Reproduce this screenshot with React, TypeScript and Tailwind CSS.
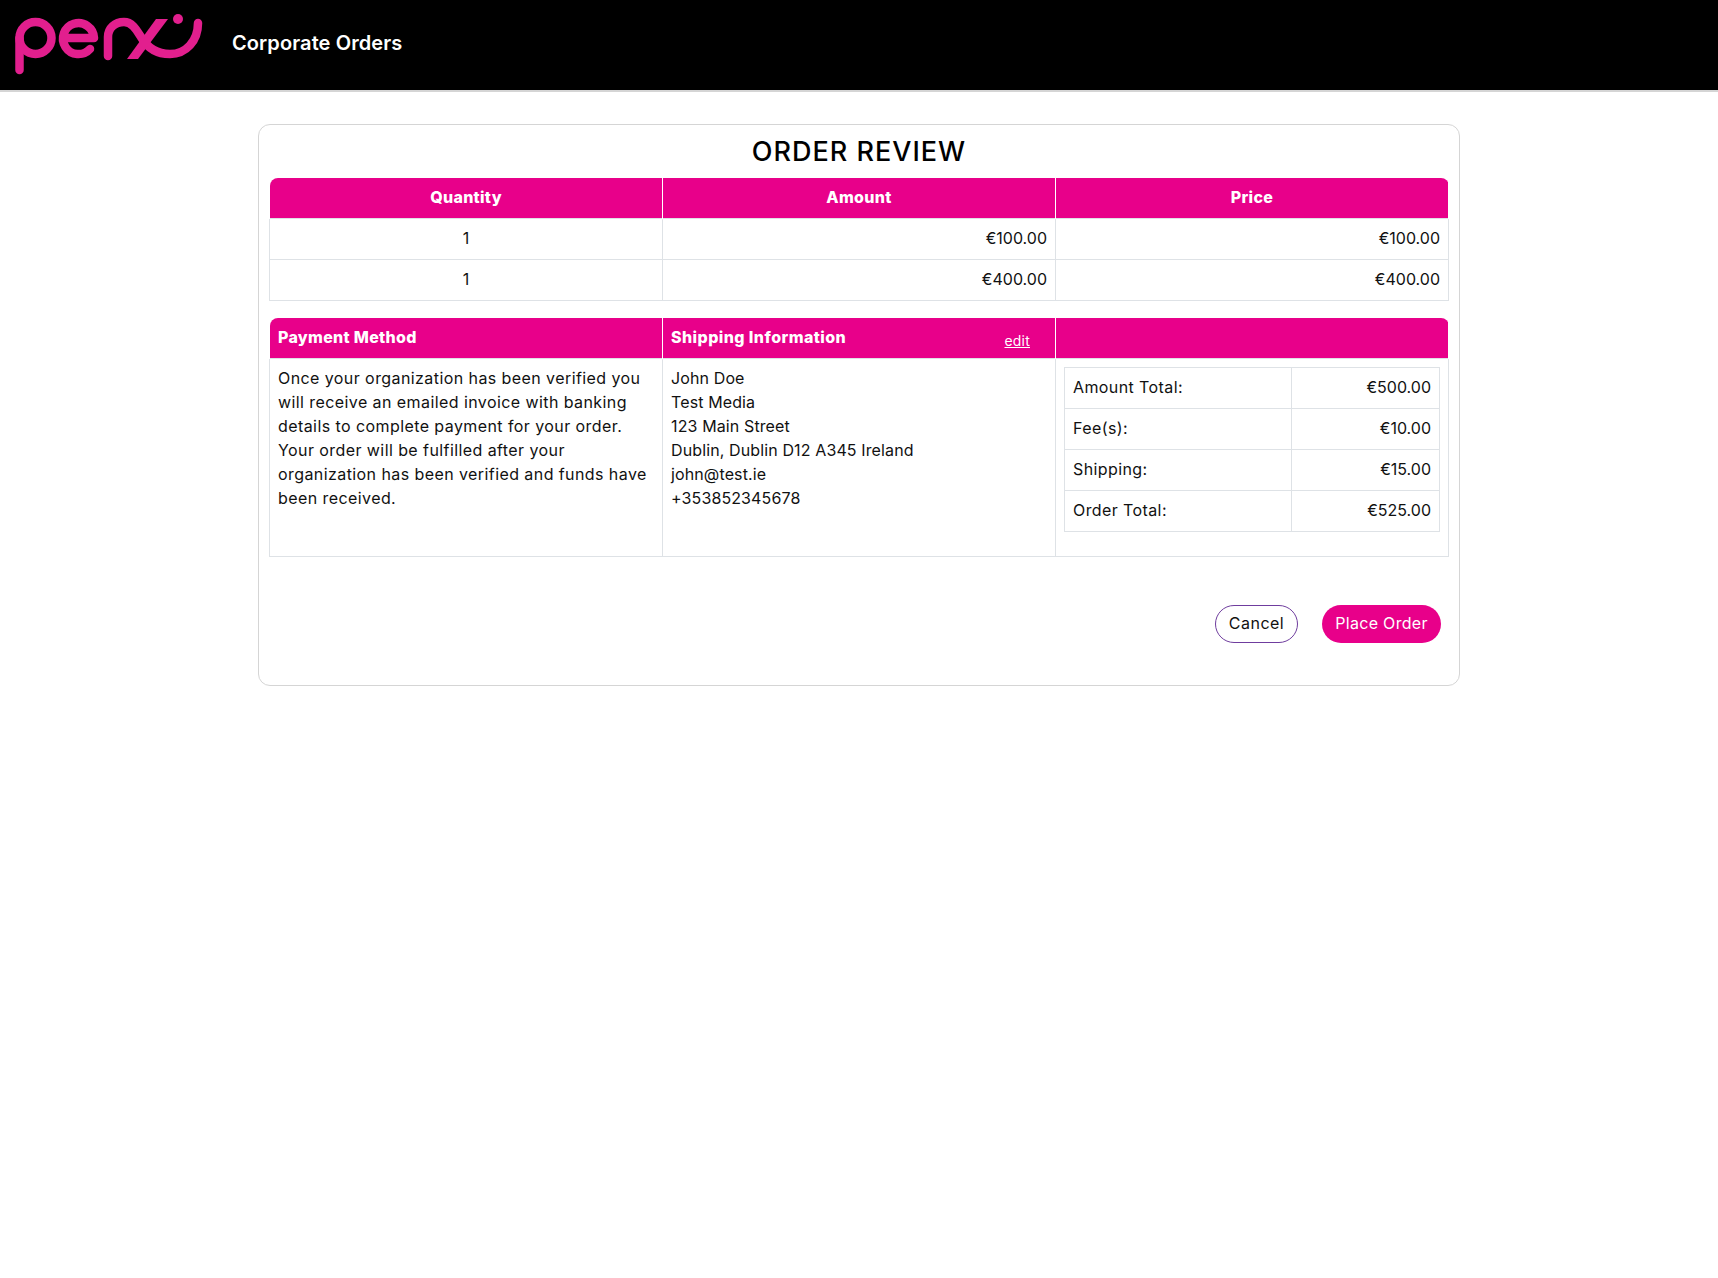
import React from "react";

const font = { fontFamily: "Inter" };

const Logo = () => (
  <svg width="200" height="70" viewBox="10 10 200 70" fill="none" className="shrink-0">
    <g stroke="#e21f8e" strokeWidth="8.5" strokeLinecap="round" strokeLinejoin="round">
      <circle cx="35.5" cy="39" r="16" />
      <path d="M19.5 39V71" />
      <path d="M63 39h31a15.5 15.5 0 1 0-4 11" />
      <path d="M108 57V38C108 29 115 23 124 23C132 23 136 30 141 38C148 50 158 55 170 55C186 55 198 42 198 24" />
    </g>
    <polygon points="127,60 138,60 168,20 156,20" fill="#e21f8e" />
    <circle cx="178" cy="20" r="5" fill="#e21f8e" />
  </svg>
);

const headCls = "bg-[#e8008a] text-white font-extrabold tracking-[0.3px] pb-[2px] border-x border-white first:rounded-tl-lg last:rounded-tr-lg";
const cellCls = "border border-[#dee2e6] px-2 pb-[2px] h-[41px]";

const orderRows = [
  ["1", "€100.00", "€100.00"],
  ["1", "€400.00", "€400.00"],
];

const totals = [
  ["Amount Total:", "€500.00"],
  ["Fee(s):", "€10.00"],
  ["Shipping:", "€15.00"],
  ["Order Total:", "€525.00"],
];

export default function App() {
  return (
    <div className="min-h-[1278px] bg-white text-[#111] text-base" style={font}>
      <header className="flex items-center h-[92px] bg-black border-b-2 border-[#d5d5d5]">
        <div className="ml-[10px] -mt-[2px]">
          <Logo />
        </div>
        <span className="ml-[22px] -mt-[4px] text-white font-semibold text-[20px] tracking-[0.1px]">Corporate Orders</span>
      </header>

      <main className="mx-[258px] mt-8 h-[562px] rounded-xl border border-[#d5d5d5] px-[10px]">
        <h1 className="h-[53px] pt-[9px] text-center text-[27px] leading-[36px] font-medium tracking-[1px] text-black">ORDER REVIEW</h1>

        <table className="w-full table-fixed border-collapse">
          <thead>
            <tr className="h-10">
              <th className={headCls}>Quantity</th>
              <th className={headCls}>Amount</th>
              <th className={headCls}>Price</th>
            </tr>
          </thead>
          <tbody>
            {orderRows.map((r, i) => (
              <tr key={i}>
                <td className={`${cellCls} text-center`}>{r[0]}</td>
                <td className={`${cellCls} text-right`}>{r[1]}</td>
                <td className={`${cellCls} text-right`}>{r[2]}</td>
              </tr>
            ))}
          </tbody>
        </table>

        <table className="w-full table-fixed border-collapse mt-[17px]">
          <thead>
            <tr className="h-[41px]">
              <th className={`${headCls} text-left px-2`}>Payment Method</th>
              <th className={`${headCls} text-left px-2`}>
                <div className="flex items-center justify-between pr-[17px]">
                  <span className="tracking-[0.42px]">Shipping Information</span>
                  <a href="#" className="font-normal text-sm tracking-[0.2px] underline mt-[8px]">edit</a>
                </div>
              </th>
              <th className={headCls}></th>
            </tr>
          </thead>
          <tbody>
            <tr>
              <td className="border border-[#dee2e6] align-top px-2 pt-[7px] leading-6 tracking-[0.42px] h-[198px]">
                Once your organization has been verified you will receive an emailed invoice with banking details to complete payment for your order. Your order will be fulfilled after your organization has been verified and funds have been received.
              </td>
              <td className="border border-[#dee2e6] align-top px-2 pt-[7px] leading-6 tracking-[0.12px]">
                <div>John Doe</div>
                <div>Test Media</div>
                <div>123 Main Street</div>
                <div>Dublin, Dublin D12 A345 Ireland</div>
                <div>john@test.ie</div>
                <div>+353852345678</div>
              </td>
              <td className="border border-[#dee2e6] align-top px-2 pt-2">
                <table className="w-full border-collapse">
                  <tbody>
                    {totals.map(([label, value]) => (
                      <tr key={label}>
                        <td className={`${cellCls} w-[227px] tracking-[0.4px]`}>{label}</td>
                        <td className={`${cellCls} text-right`}>{value}</td>
                      </tr>
                    ))}
                  </tbody>
                </table>
              </td>
            </tr>
          </tbody>
        </table>

        <div className="flex justify-end gap-6 mt-12 pr-2">
          <button className="h-[38px] w-[83px] pb-[2px] rounded-full border border-[#6f3d9e] bg-white tracking-[0.5px]">Cancel</button>
          <button className="h-[38px] w-[119px] pb-[2px] rounded-full bg-[#e8008a] text-white tracking-[0.3px]">Place Order</button>
        </div>
      </main>
    </div>
  );
}
